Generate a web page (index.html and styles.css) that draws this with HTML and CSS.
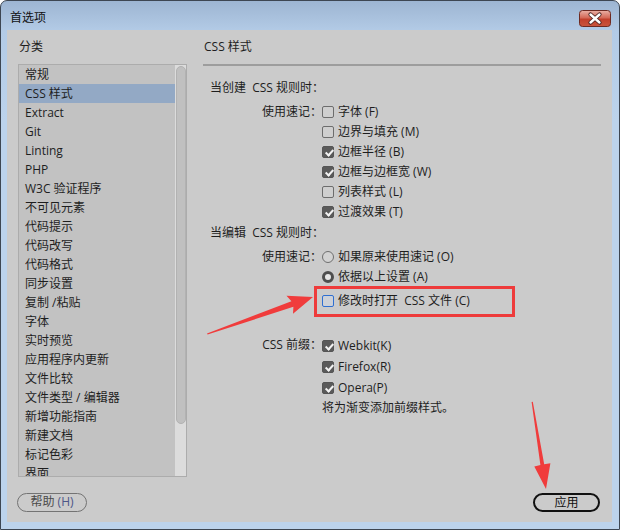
FILE: index.html
```html
<!DOCTYPE html>
<html lang="zh-CN">
<head>
<meta charset="utf-8">
<title>首选项</title>
<link rel="stylesheet" href="styles.css">
</head>
<body>
<div class="window">
  <div class="titlebar">
    <span class="title">首选项</span>
    <span class="close">
      <svg width="32" height="17" viewBox="0 0 32 17">
        <defs>
          <linearGradient id="cg" x1="0" y1="0" x2="0" y2="1">
            <stop offset="0" stop-color="#eab1a6"/>
            <stop offset="0.45" stop-color="#d46a58"/>
            <stop offset="0.55" stop-color="#c2402c"/>
            <stop offset="1" stop-color="#c9563e"/>
          </linearGradient>
        </defs>
        <rect x="0.5" y="0.5" width="31" height="16" rx="3" fill="url(#cg)" stroke="#6d2a22"/>
        <path d="M11.5 4.5 L20.5 12.5 M20.5 4.5 L11.5 12.5" stroke="#4a2320" stroke-width="4.2" stroke-linecap="round"/>
        <path d="M11.5 4.5 L20.5 12.5 M20.5 4.5 L11.5 12.5" stroke="#ffffff" stroke-width="2.4" stroke-linecap="round"/>
      </svg>
    </span>
  </div>
  <div class="client">
    <div class="left">
      <div class="heading">分类</div>
      <div class="listbox">
        <ul class="items">
          <li>常规</li>
          <li class="selected">CSS 样式</li>
          <li>Extract</li>
          <li>Git</li>
          <li>Linting</li>
          <li>PHP</li>
          <li>W3C 验证程序</li>
          <li>不可见元素</li>
          <li>代码提示</li>
          <li>代码改写</li>
          <li>代码格式</li>
          <li>同步设置</li>
          <li>复制 /粘贴</li>
          <li>字体</li>
          <li>实时预览</li>
          <li>应用程序内更新</li>
          <li>文件比较</li>
          <li>文件类型 / 编辑器</li>
          <li>新增功能指南</li>
          <li>新建文档</li>
          <li>标记色彩</li>
          <li>界面</li>
        </ul>
        <div class="scrollbar"><div class="thumb"></div></div>
      </div>
      <div class="btn help">帮助 <span class="acc">(H)</span></div>
    </div>
    <div class="right">
      <div class="heading">CSS 样式</div>
      <div class="sep"></div>
      <div class="section s1">当创建 &nbsp;CSS 规则时：</div>
      <div class="group g1">
        <div class="label">使用速记：</div>
        <div class="opts">
          <div class="opt"><span class="cb"></span>字体 (F)</div>
          <div class="opt"><span class="cb"></span>边界与填充 (M)</div>
          <div class="opt"><span class="cb on"></span>边框半径 (B)</div>
          <div class="opt"><span class="cb on"></span>边框与边框宽 (W)</div>
          <div class="opt"><span class="cb"></span>列表样式 (L)</div>
          <div class="opt"><span class="cb on"></span>过渡效果 (T)</div>
        </div>
      </div>
      <div class="section s2">当编辑 &nbsp;CSS 规则时：</div>
      <div class="group g2">
        <div class="label">使用速记：</div>
        <div class="opts">
          <div class="opt"><span class="rb"></span>如果原来使用速记 (O)</div>
          <div class="opt"><span class="rb on"></span>依据以上设置 (A)</div>
          <div class="opt marked"><span class="cb focus"></span>修改时打开 &nbsp;CSS 文件 (C)<span class="redbox"></span></div>
        </div>
      </div>
      <div class="group g3">
        <div class="label">CSS 前缀：</div>
        <div class="opts">
          <div class="opt tall"><span class="cb on"></span>Webkit(K)</div>
          <div class="opt tall"><span class="cb on"></span>Firefox(R)</div>
          <div class="opt tall"><span class="cb on"></span>Opera(P)</div>
          <div class="note">将为渐变添加前缀样式。</div>
        </div>
      </div>
      <div class="footer"><div class="btn apply">应用</div></div>
    </div>
  </div>
  <svg class="annot" width="620" height="530" viewBox="0 0 620 530">
    <polygon fill="#f03c3c" points="207,333.5 291.4,301.2 286.5,295.8 313,297 293,313.8 293.4,306.8 207.6,334.6"/>
    <polygon fill="#f03c3c" points="531.6,402 540.4,465 534.3,466.5 546,489 550.4,463.2 544.2,464.3 532.8,401.8"/>
  </svg>
</div>
</body>
</html>
```

FILE: styles.css
```css
* { box-sizing: border-box; }
html, body { margin: 0; padding: 0; background: #ffffff; }
body {
  width: 620px;
  height: 530px;
  overflow: hidden;
  font-family: "Open Sans", "Noto Sans CJK SC", sans-serif;
  font-size: 12px;
  color: #1e1e1e;
}
.window {
  position: relative;
  width: 620px;
  height: 530px;
  border: 1px solid #3d4652;
  border-radius: 7px 7px 0 0;
  background: linear-gradient(#9db5d2 0px, #b3cbe6 30px, #bcd3ec 120px, #bcd3ec 100%);
  display: flex;
  flex-direction: column;
}
.titlebar {
  height: 29px;
  display: flex;
  justify-content: space-between;
  align-items: flex-start;
  padding: 8px 8px 0 9px;
}
.title {
  line-height: 18px;
  font-size: 12px;
  color: #111;
}
.close { display: block; width: 32px; height: 17px; margin-top: 1px; }
.close svg { display: block; }
.client {
  flex: 1;
  margin: 0 7px 7px 6px;
  background: #cbcbcb;
  display: flex;
  gap: 16px;
  padding: 7px 11px 10px 11px;
}
.left {
  width: 169px;
  display: flex;
  flex-direction: column;
}
.heading {
  height: 20px;
  line-height: 20px;
  padding-left: 1px;
  font-size: 12px;
}
.listbox {
  margin-top: 7px;
  height: 413px;
  border: 1px solid #acacac;
  background: #c2c2c2;
  display: flex;
  overflow: hidden;
}
.items {
  list-style: none;
  margin: 0;
  padding: 0;
  width: 156px;
  overflow: hidden;
}
.items li {
  height: 19px;
  line-height: 19px;
  padding-left: 6px;
  white-space: nowrap;
}
.items li.selected { background: #93a9c5; }
.scrollbar {
  width: 11px;
  background: #dcdcdc;
  padding: 1px 0 0 1px;
}
.thumb {
  width: 10px;
  height: 358px;
  border: 1px solid #b2b2b2;
  border-radius: 5px;
  background: #c0c0c0;
}
.btn {
  height: 19px;
  line-height: 16px;
  text-align: center;
  border-radius: 10px;
}
.help {
  margin-top: 16px;
  margin-left: -1px;
  width: 70px;
  border: 1.5px solid #737373;
  color: #4a4a4a;
}
.help .acc { color: #4d5688; }
.right {
  flex: 1;
  display: flex;
  flex-direction: column;
}
.sep {
  margin-top: 7px;
  height: 2px;
  width: 398px;
  background: #9d9d9d;
}
.section {
  height: 20px;
  line-height: 20px;
  padding-left: 7px;
}
.s1 { margin-top: 12px; }
.s2 { margin-top: 1px; }
.group {
  display: grid;
  grid-template-columns: 119px 1fr;
  column-gap: 0;
}
.g1 { margin-top: 4px; }
.g2 { margin-top: 4px; }
.g3 { margin-top: 24px; }
.label {
  text-align: right;
  height: 20px;
  line-height: 20px;
  white-space: nowrap;
}
.opts { display: flex; flex-direction: column; }
.opt {
  position: relative;
  height: 20px;
  line-height: 20px;
  display: flex;
  align-items: center;
  gap: 4px;
  white-space: nowrap;
}
.opt.tall { height: 21px; line-height: 21px; }
.opt.marked { margin-top: 4px; }
.note { height: 19px; line-height: 19px; }
.cb {
  position: relative;
  width: 12px;
  height: 12px;
  flex: none;
  border: 1px solid #6d6d6d;
  border-radius: 2px;
  background: #cfcfcf;
}
.cb.on {
  background: #5a5a5a;
  border-color: #555;
}
.cb.on::after {
  content: "";
  position: absolute;
  left: 3.5px;
  top: 1px;
  width: 3px;
  height: 6px;
  border-right: 2px solid #f2f2f2;
  border-bottom: 2px solid #f2f2f2;
  transform: rotate(42deg);
}
.cb.focus {
  border: 1.5px solid #2f6fd1;
  background: #cdd1d8;
}
.rb {
  width: 12px;
  height: 12px;
  flex: none;
  border: 1px solid #6f6f6f;
  border-radius: 50%;
  background: #d2d2d2;
}
.rb.on {
  border: 3.5px solid #4e4e4e;
  background: #e6e6e6;
}
.redbox {
  position: absolute;
  left: -8px;
  top: -5px;
  width: 201px;
  height: 31px;
  border: 3px solid #ee3b3b;
}
.footer {
  margin-top: auto;
  display: flex;
  justify-content: flex-end;
  padding-right: 1px;
}
.apply {
  width: 67px;
  height: 19px;
  border: 2px solid #111;
  line-height: 15px;
  color: #111;
}
.annot {
  position: absolute;
  left: -1px;
  top: -1px;
  pointer-events: none;
}
```
